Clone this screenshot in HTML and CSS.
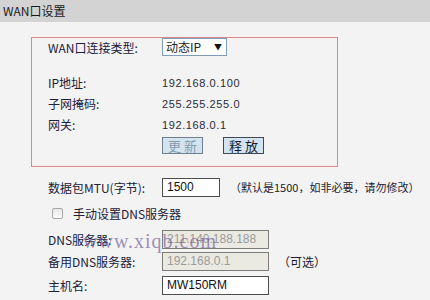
FILE: index.html
```html
<!DOCTYPE html>
<html lang="zh-CN">
<head>
    <meta charset="UTF-8">
    <title>WAN口设置</title>
    <link rel="stylesheet" href="styles.css">
</head>
<body>

    <div class="title-bar">WAN口设置</div>

    <div class="content">
        <div class="wan-box">
            <div class="row row-type">
                <span class="label">WAN口连接类型:</span>
                <div class="select">动态IP<span class="arrow">▼</span></div>
            </div>
            <div class="row row-info">
                <span class="label">IP地址:</span>
                <span class="value">192.168.0.100</span>
            </div>
            <div class="row row-info">
                <span class="label">子网掩码:</span>
                <span class="value">255.255.255.0</span>
            </div>
            <div class="row row-info">
                <span class="label">网关:</span>
                <span class="value">192.168.0.1</span>
            </div>
            <div class="row row-buttons">
                <button class="btn btn-off">更新</button>
                <button class="btn">释放</button>
            </div>
        </div>

        <div class="row row-mtu">
            <span class="label">数据包MTU(字节):</span>
            <span class="input input-short">1500</span>
            <span class="hint">（默认是1500，如非必要，请勿修改）</span>
        </div>

        <div class="row row-check">
            <span class="checkbox"></span>
            <span class="check-text">手动设置DNS服务器</span>
        </div>

        <div class="row row-dns">
            <span class="label">DNS服务器:</span>
            <span class="input input-off">211.140.188.188</span>
            <span class="watermark">www.xiqb.com</span>
        </div>

        <div class="row row-dns2">
            <span class="label">备用DNS服务器:</span>
            <span class="input input-off">192.168.0.1</span>
            <span class="hint hint-opt">（可选）</span>
        </div>

        <div class="row row-host">
            <span class="label">主机名:</span>
            <span class="input">MW150RM</span>
        </div>
    </div>

</body>
</html>
```

FILE: styles.css
```css
/* General Styles */
body {
    margin: 0;
    background-color: #f3f3f3;
    font-family: "Noto Sans CJK SC", "Liberation Sans", sans-serif;
    font-size: 12px;
    color: #20203a;
}

.title-bar {
    height: 22px;
    line-height: 22px;
    padding-left: 3px;
    background-color: #d3d3d3;
    font-size: 12px;
    color: #1a1a1a;
}

.content {
    padding-left: 31px;
    position: relative;
}

/* WAN box with red frame */
.wan-box {
    width: 289px;
    margin-top: 15px;
    border: 1px solid #d8898c;
    padding: 0 0 12px 16px;
}

.row {
    display: flex;
    align-items: center;
}

.label {
    width: 114px;
    flex-shrink: 0;
}

.row-type {
    height: 19px;
}

.select {
    display: flex;
    align-items: center;
    justify-content: space-between;
    width: 56px;
    height: 16px;
    margin-top: -2px;
    padding: 0 4px 0 3px;
    border: 1px solid #7f9db9;
    background: #fff;
    font-size: 12px;
    color: #222;
}

.arrow {
    font-size: 8px;
    color: #111;
}

.row-type + .row-info {
    margin-top: 15px;
}

.row-info {
    height: 21px;
}

.value {
    font-family: "Liberation Sans", sans-serif;
    font-size: 11px;
    letter-spacing: 0.6px;
    color: #2a2a3a;
}

/* 更新 / 释放 buttons */
.row-buttons {
    height: 17px;
    margin-top: 2px;
    padding-left: 114px;
    gap: 20px;
}

.btn {
    width: 41px;
    height: 17px;
    padding: 0;
    border: 1px solid #3c4a58;
    background: #d3e4f0;
    font-family: "Noto Sans CJK SC", sans-serif;
    font-size: 13px;
    letter-spacing: 3px;
    line-height: 15px;
    color: #1a1a2a;
    text-indent: 3px;
}

.btn-off {
    color: #8a9aab;
    border-color: #6f7f8e;
}

/* Rows below the box */
.row-mtu,
.row-check,
.row-dns,
.row-dns2,
.row-host {
    padding-left: 17px;
}

.row-mtu {
    height: 22px;
    margin-top: 9px;
}

.row-check {
    height: 30px;
}

.row-dns {
    height: 22px;
}

.row-dns2 {
    height: 23px;
}

.row-host {
    height: 24px;
}

.input {
    box-sizing: border-box;
    width: 107px;
    height: 19px;
    line-height: 17px;
    padding-left: 4px;
    border: 1px solid #4d4d4d;
    background: #fff;
    font-family: "Liberation Sans", sans-serif;
    font-size: 12px;
    color: #111;
}

.input-short {
    width: 58px;
}

.input-off {
    background: #ebeae2;
    border-color: #7d7d78;
    color: #9a9a9a;
}

.hint {
    margin-left: 10px;
    font-size: 11px;
    white-space: nowrap;
    color: #1c1c30;
}

.hint-opt {
    margin-left: 9px;
    font-size: 12px;
}

/* Checkbox */
.checkbox {
    box-sizing: border-box;
    width: 11px;
    height: 11px;
    margin-left: 4px;
    border: 1px solid #a7a7a7;
    border-radius: 2px;
    background: linear-gradient(#e8e8e8, #fdfdfd);
}

.check-text {
    margin-left: 10px;
}

/* Watermark over the DNS row */
.watermark {
    position: absolute;
    left: 83px;
    margin-top: 4px;
    font-family: "Liberation Serif", serif;
    font-size: 20px;
    letter-spacing: 1px;
    color: rgba(105, 85, 150, 0.65);
}
```
